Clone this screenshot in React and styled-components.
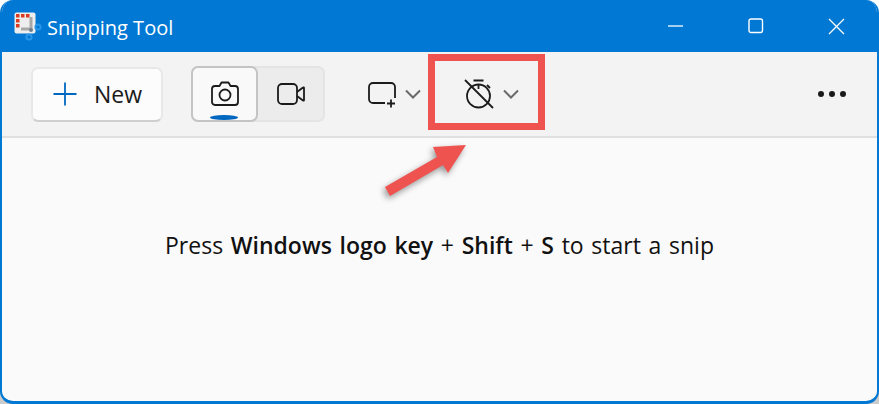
import React from 'react';
import styled, { createGlobalStyle } from 'styled-components';

const Global = createGlobalStyle`
  html, body { margin: 0; padding: 0; background: linear-gradient(#ffffff 50%, #cccccc 50%); }
  body { font-family: "Open Sans", "Noto Sans", sans-serif; }
`;

const Win = styled.div`
  position: relative;
  box-sizing: border-box;
  width: 879px;
  height: 404px;
  border: 2px solid #0078d4;
  border-top: 0;
  border-bottom-width: 3px;
  border-radius: 13px;
  background: #fafafa;
  display: flex;
  flex-direction: column;
  overflow: hidden;
`;

const TitleBar = styled.div`
  height: 52px;
  flex: none;
  background: #0078d4;
  display: flex;
  align-items: center;
  color: #fff;
  padding: 0 1px 0 12px;
`;

const Title = styled.span`
  font-size: 20px;
  margin-left: 5px;
  margin-top: 3px;
  flex: 1;
`;

const WinBtn = styled.button`
  width: 80px;
  height: 52px;
  padding: 0;
  border: 0;
  background: none;
  display: flex;
  align-items: center;
  justify-content: center;
`;

const Toolbar = styled.div`
  position: relative;
  height: 86px;
  flex: none;
  box-sizing: border-box;
  background: #f3f3f3;
  border-bottom: 2px solid #e0e0e0;
  display: flex;
  align-items: center;
  padding: 0 29px;
`;

const NewBtn = styled.button`
  box-sizing: border-box;
  width: 132px;
  height: 55px;
  background: #fcfcfc;
  border: 2px solid #e8e8e8;
  border-bottom-color: #cfcfcf;
  border-radius: 7px;
  display: flex;
  align-items: center;
  padding: 0 0 0 20px;
  gap: 17px;
  font: 400 23px "Open Sans", sans-serif;
  color: #1b1b1b;
`;

const Segment = styled.div`
  margin-left: 28px;
  width: 134px;
  height: 56px;
  box-sizing: border-box;
  background: #ececec;
  border: 2px solid #e4e4e4;
  border-radius: 7px;
  display: flex;
`;

const SegBtn = styled.div`
  position: relative;
  box-sizing: border-box;
  width: ${p => (p.$active ? '67px' : '65px')};
  height: 56px;
  margin: -2px 0 0 ${p => (p.$active ? '-2px' : '0')};
  background: ${p => (p.$active ? '#f9f9f9' : 'transparent')};
  border: 2px solid ${p => (p.$active ? '#c4c4c4' : 'transparent')};
  border-radius: 7px;
  display: flex;
  align-items: center;
  justify-content: center;
`;

const ActiveBar = styled.div`
  position: absolute;
  left: 17px;
  bottom: 0;
  width: 28px;
  height: 5px;
  border-radius: 50%;
  background: #0067c0;
`;

const Dropdown = styled.div`
  display: flex;
  align-items: center;
  margin-left: ${p => p.$ml}px;
  gap: ${p => p.$gap}px;
`;

const More = styled.div`
  margin-left: auto;
  margin-right: 2px;
  display: flex;
  gap: 5px;
`;

const Dot = styled.span`
  width: 6px;
  height: 6px;
  border-radius: 50%;
  background: #1a1a1a;
`;

const Highlight = styled.div`
  position: absolute;
  left: 426px;
  top: 2px;
  width: 117px;
  height: 76px;
  box-sizing: border-box;
  border: 7px solid #ef5350;
  pointer-events: none;
`;

const Arrow = styled.svg`
  position: absolute;
  left: 378px;
  top: 140px;
  filter: drop-shadow(-2px 3px 3px rgba(0, 0, 0, 0.4));
`;

const Body = styled.div`
  flex: 1;
  display: flex;
  justify-content: center;
  padding-top: 92px;
  font-size: 23px;
  word-spacing: 1.7px;
  color: #111;
  b { font-weight: 600; }
`;

const Message = styled.div`
  line-height: 30px;
  height: 30px;
  white-space: pre;
`;

const AppIcon = () => (
  <svg width="28" height="28" viewBox="0 0 28 28" style={{ overflow: 'visible' }}>
    <rect x="0.5" y="0.5" width="21" height="21" rx="2" fill="#eeeeee" />
    <g fill="#d83b1e">
      <rect x="2" y="2" width="3.5" height="3.5" />
      <rect x="7" y="2" width="3.5" height="3.5" />
      <rect x="12" y="2" width="3.5" height="3.5" />
      <rect x="2" y="7" width="3.5" height="3.5" />
      <rect x="2" y="12" width="3.5" height="3.5" />
    </g>
    <path d="M7 17h11.5M17 5v13" stroke="#a8a8a8" strokeWidth="3" fill="none" />
    <g fill="none" stroke="#2a96e8" strokeWidth="2">
      <circle cx="24" cy="15" r="2.6" />
      <circle cx="15" cy="25" r="2.6" />
    </g>
    <circle cx="17" cy="18" r="2" fill="#6d7f8e" />
  </svg>
);

const Plus = () => (
  <svg width="24" height="24" viewBox="0 0 24 24" stroke="#0067c0" strokeWidth="1.8" fill="none">
    <path d="M12 0.5v23M0.5 12h23" />
  </svg>
);

const Camera = () => (
  <svg width="30" height="28" viewBox="0 0 30 28" fill="none" stroke="#1b1b1b" strokeWidth="1.8">
    <path d="M5 6h4.5l2-3.5h7l2 3.5H25a3 3 0 0 1 3 3v13a3 3 0 0 1-3 3H5a3 3 0 0 1-3-3V9a3 3 0 0 1 3-3z" strokeLinejoin="round" />
    <circle cx="15" cy="15" r="5.5" />
  </svg>
);

const Video = () => (
  <svg width="30" height="24" viewBox="0 0 30 24" fill="none" stroke="#1b1b1b" strokeWidth="1.8" strokeLinejoin="round">
    <rect x="2" y="2" width="19" height="20" rx="4" />
    <path d="M21 10l6-4.5a0.6 0.6 0 0 1 1 .5v12a0.6 0.6 0 0 1-1 .5l-6-4.5" />
  </svg>
);

const SnipShape = () => (
  <svg width="30" height="28" viewBox="0 0 30 28" fill="none" stroke="#1b1b1b" strokeWidth="1.8">
    <path d="M18 23H6a4 4 0 0 1-4-4V7a4 4 0 0 1 4-4h18a4 4 0 0 1 4 4v11" />
    <path d="M24 19.5v8M20 23.5h8" />
  </svg>
);

const Timer = () => (
  <svg width="30" height="30" viewBox="0 0 30 30" fill="none" stroke="#1b1b1b" strokeWidth="1.8">
    <circle cx="14.5" cy="17" r="11.5" />
    <path d="M9.5 1.5h10M14.5 6v4M23 6l3 3" />
    <path d="M1 1l28 28" />
  </svg>
);

const Chevron = () => (
  <svg width="16" height="10" viewBox="0 0 16 10" fill="none" stroke="#6a6a6a" strokeWidth="2">
    <path d="M1 1.5l7 7 7-7" />
  </svg>
);

export default function App() {
  return (
    <>
      <Global />
      <Win>
        <TitleBar>
          <AppIcon />
          <Title>Snipping Tool</Title>
          <WinBtn>
            <svg width="16" height="4" stroke="#fff" strokeWidth="1.3"><path d="M0 2h15" /></svg>
          </WinBtn>
          <WinBtn>
            <svg width="16" height="16" fill="none" stroke="#fff" strokeWidth="1.4"><rect x="1" y="1" width="13.5" height="13.5" rx="2" /></svg>
          </WinBtn>
          <WinBtn>
            <svg width="17" height="17" fill="none" stroke="#fff" strokeWidth="1.3"><path d="M1 1l15 15M16 1L1 16" /></svg>
          </WinBtn>
        </TitleBar>
        <Toolbar>
          <NewBtn><Plus /> New</NewBtn>
          <Segment>
            <SegBtn $active><Camera /><ActiveBar /></SegBtn>
            <SegBtn><Video /></SegBtn>
          </Segment>
          <Dropdown $ml={42} $gap={8}><SnipShape /><Chevron /></Dropdown>
          <Dropdown $ml={43} $gap={9}><Timer /><Chevron /></Dropdown>
          <More><Dot /><Dot /><Dot /></More>
          <Highlight />
        </Toolbar>
        <Body>
          <Message>Press <b>Windows logo key</b> + <b>Shift</b> + <b>S</b> to start a snip</Message>
        </Body>
        <Arrow width="90" height="70" viewBox="0 0 90 70">
          <path d="M5 47L57 17L53 7L86 5L68 33L63 25L10 56z" fill="#ef5350" />
        </Arrow>
      </Win>
    </>
  );
}
